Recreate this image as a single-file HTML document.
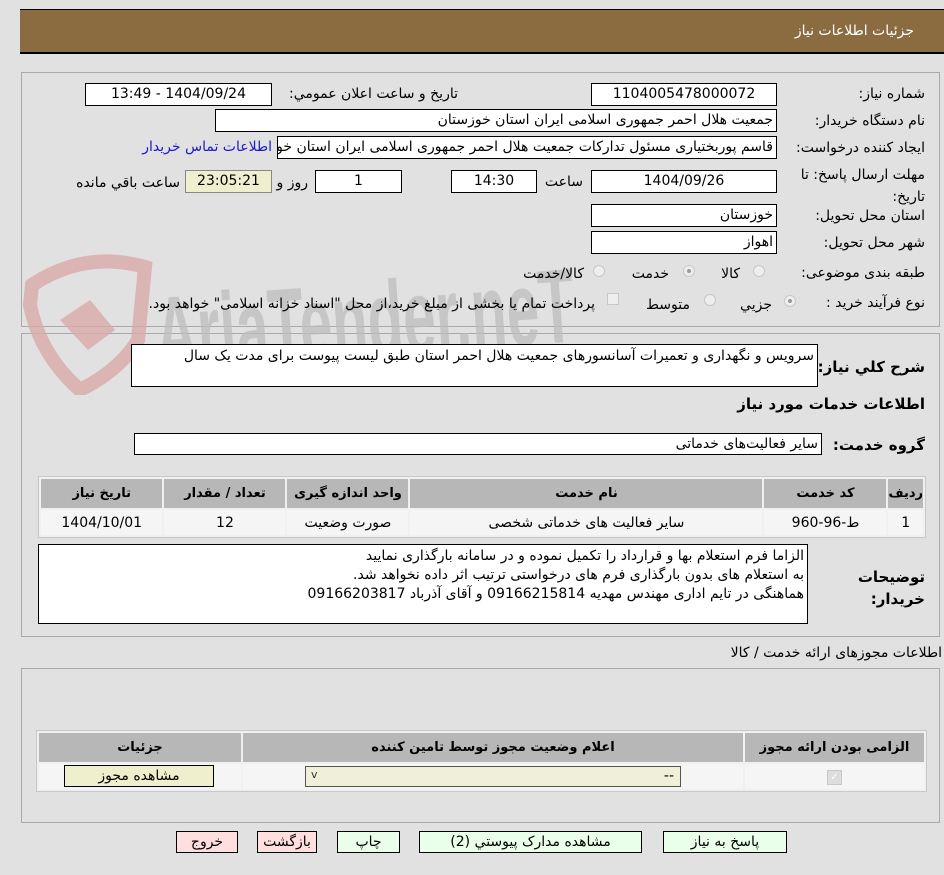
<!DOCTYPE html>
<html><head><meta charset="utf-8"><style>
body{margin:0;width:944px;height:875px;background:#e1e1e1;position:relative;overflow:hidden;font-family:"DejaVu Sans","Liberation Sans","Noto Sans CJK SC",sans-serif;font-size:14px;color:#000}
.a{position:absolute;white-space:nowrap}
.r{direction:rtl;text-align:right}
.in{position:absolute;background:#fff;border:1px solid #000;box-sizing:border-box;height:23px;line-height:21px;white-space:nowrap;overflow:hidden;direction:rtl;padding:0 3px;font-size:14px}
.c{text-align:center}
.lbl{position:absolute;direction:rtl;text-align:right;white-space:nowrap;right:19px}
.b{font-weight:bold;font-size:15px}
.rad{position:absolute;width:12px;height:12px;border-radius:50%;border:1px solid #c8c8c8;background:#eee;box-sizing:border-box}
.rad.on::after{content:"";position:absolute;left:3px;top:3px;width:4px;height:4px;border-radius:50%;background:#999}
table{border-collapse:separate;border-spacing:2px;position:absolute;background:#f0f0f0;border:1px solid #c8c8c8}
th{background:#b7b7b7;font-size:13px;font-weight:bold;height:29px;padding:0}
td{background:#f5f5f5;height:25px;padding:0;text-align:center;font-size:14px}
.btn{position:absolute;border:1px solid #000;box-sizing:border-box;height:22px;line-height:20px;text-align:center;font-size:14px;direction:rtl}
</style></head><body>
<div class="a" style="left:20px;top:9px;width:924px;height:45px;background:#8b6c41;border-top:1px solid #000;border-bottom:2px solid #000;box-sizing:border-box"></div>
<div class="a r" style="right:30px;top:23px;color:#fff;font-size:14px">جزئیات اطلاعات نياز</div>

<div class="a" style="left:21px;top:72px;width:919px;height:255px;border:1px solid #a9a9a9;box-sizing:border-box"></div>
<div class="a" style="left:21px;top:333px;width:919px;height:304px;border:1px solid #a9a9a9;box-sizing:border-box"></div>

<svg class="a" style="left:20px;top:245px" width="560" height="150" viewBox="0 0 560 150">
<path d="M12 40 Q65 5 125 22 L118 95 Q100 125 60 145 Q20 110 10 60 Z" fill="none" stroke="#d9a9a9" stroke-width="14" opacity="0.8"/>
<path d="M40 75 L70 55 L95 85 L68 105 Z" fill="#d9a9a9" opacity="0.8"/>
<text x="135" y="112" font-family="Liberation Sans" font-weight="bold" font-size="105" fill="#bdbdbd" opacity="0.75" transform="rotate(-4 330 80)" textLength="420" lengthAdjust="spacingAndGlyphs">AriaTender.neT</text>
</svg>

<div class="lbl" style="top:86px">شماره نياز:</div>
<div class="in c" style="left:591px;top:83px;width:186px">1104005478000072</div>
<div class="a r" style="right:486px;top:86px">تاريخ و ساعت اعلان عمومي:</div>
<div class="in c" style="left:85px;top:83px;width:187px">1404/09/24 - 13:49</div>

<div class="lbl" style="top:113px">نام دستگاه خريدار:</div>
<div class="in" style="left:215px;top:109px;width:562px">جمعيت هلال احمر جمهوری اسلامی ايران استان خوزستان</div>

<div class="lbl" style="top:140px">ايجاد کننده درخواست:</div>
<div class="in" style="left:277px;top:136px;width:500px">قاسم پوربختياری مسئول تدارکات جمعيت هلال احمر جمهوری اسلامی ايران استان خوزستان</div>
<div class="a r" style="right:672px;top:139px;color:#1a1acc">اطلاعات تماس خريدار</div>

<div class="lbl" style="top:164px;line-height:22px">مهلت ارسال پاسخ: تا<br>تاريخ:</div>
<div class="in c" style="left:591px;top:170px;width:186px">1404/09/26</div>
<div class="a r" style="right:361px;top:174px">ساعت</div>
<div class="in c" style="left:451px;top:170px;width:86px">14:30</div>
<div class="in c" style="left:315px;top:170px;width:87px">1</div>
<div class="a r" style="right:636px;top:175px">روز و</div>
<div class="in c" style="left:185px;top:170px;width:87px;background:#efefcf;border-color:#888">23:05:21</div>
<div class="a r" style="right:764px;top:175px">ساعت باقي مانده</div>

<div class="lbl" style="top:208px">استان محل تحويل:</div>
<div class="in" style="left:591px;top:204px;width:186px">خوزستان</div>
<div class="lbl" style="top:235px">شهر محل تحويل:</div>
<div class="in" style="left:591px;top:231px;width:186px">اهواز</div>

<div class="lbl" style="top:265px">طبقه بندی موضوعی:</div>
<div class="rad" style="left:753px;top:265px"></div><div class="a r" style="right:204px;top:266px">کالا</div>
<div class="rad on" style="left:683px;top:265px"></div><div class="a r" style="right:275px;top:266px">خدمت</div>
<div class="rad" style="left:593px;top:265px"></div><div class="a r" style="right:360px;top:266px">کالا/خدمت</div>

<div class="lbl" style="top:295px">نوع فرآيند خريد :</div>
<div class="rad on" style="left:784px;top:295px"></div><div class="a r" style="right:172px;top:297px">جزيي</div>
<div class="rad" style="left:704px;top:294px"></div><div class="a r" style="right:254px;top:297px">متوسط</div>
<div class="a" style="left:607px;top:293px;width:12px;height:12px;border:1px solid #c8c8c8;background:#eee;box-sizing:border-box"></div>
<div class="a r" style="right:349px;top:296px">پرداخت تمام يا بخشی از مبلغ خريد،از محل "اسناد خزانه اسلامی" خواهد بود.</div>

<div class="lbl b" style="top:358px">شرح کلي نياز:</div>
<div class="in" style="left:131px;top:344px;width:687px;height:43px;line-height:22px">سرويس و نگهداری و تعميرات آسانسورهای جمعيت هلال احمر استان طبق ليست پيوست برای مدت يک سال</div>
<div class="lbl b" style="top:395px">اطلاعات خدمات مورد نياز</div>
<div class="lbl b" style="top:436px">گروه خدمت:</div>
<div class="in" style="left:134px;top:433px;width:688px;height:22px">ساير فعاليت‌های خدماتی</div>

<table style="left:38px;top:476px;width:888px;direction:rtl">
<tr><th style="width:32px">رديف</th><th style="width:122px">کد خدمت</th><th style="width:352px">نام خدمت</th><th style="width:121px">واحد اندازه گيری</th><th style="width:121px">تعداد / مقدار</th><th>تاريخ نياز</th></tr>
<tr><td>1</td><td>ط-96-960</td><td>ساير فعاليت های خدماتی شخصی</td><td>صورت وضعيت</td><td>12</td><td>1404/10/01</td></tr>
</table>

<div class="lbl b" style="top:566px;line-height:22px">توضيحات<br>خريدار:</div>
<div class="in" style="left:38px;top:544px;width:770px;height:80px;line-height:19px;white-space:normal;padding-top:2px">الزاما فرم استعلام بها و قرارداد را تکميل نموده و در سامانه بارگذاری نماييد<br>به استعلام های بدون بارگذاری فرم های درخواستی ترتيب اثر داده نخواهد شد.<br>هماهنگی در تايم اداری مهندس مهديه 09166215814 و آقای آذرباد 09166203817</div>

<div class="a r" style="right:2px;top:645px">اطلاعات مجوزهای ارائه خدمت / کالا</div>
<div class="a" style="left:21px;top:668px;width:919px;height:155px;border:1px solid #a9a9a9;box-sizing:border-box"></div>
<table style="left:36px;top:730px;width:891px;direction:rtl">
<tr><th style="width:179px">الزامی بودن ارائه مجوز</th><th style="width:500px">اعلام وضعيت مجوز توسط تامين کننده</th><th>جزئيات</th></tr>
<tr><td><span style="display:inline-block;width:13px;height:13px;background:#ddd;border:1px solid #c8c8c8;color:#fff;font-size:10px;line-height:13px">✓</span></td><td></td><td></td></tr>
</table>
<div class="a" style="left:305px;top:766px;width:376px;height:21px;background:#f0f0d8;border:1px solid #555;box-sizing:border-box"><span style="position:absolute;left:5px;top:1px;font-size:11px;color:#333">v</span><span style="position:absolute;right:6px;top:1px">--</span></div>
<div class="btn" style="left:64px;top:765px;width:150px;background:#efefcd">مشاهده مجوز</div>

<div class="btn" style="left:663px;top:831px;width:124px;background:#eaffea">پاسخ به نياز</div>
<div class="btn" style="left:419px;top:831px;width:223px;background:#eaffea">مشاهده مدارک پيوستي (2)</div>
<div class="btn" style="left:337px;top:831px;width:63px;background:#eaffea">چاپ</div>
<div class="btn" style="left:257px;top:831px;width:60px;background:#ffdede">بازگشت</div>
<div class="btn" style="left:176px;top:831px;width:62px;background:#ffdede">خروج</div>
</body></html>
